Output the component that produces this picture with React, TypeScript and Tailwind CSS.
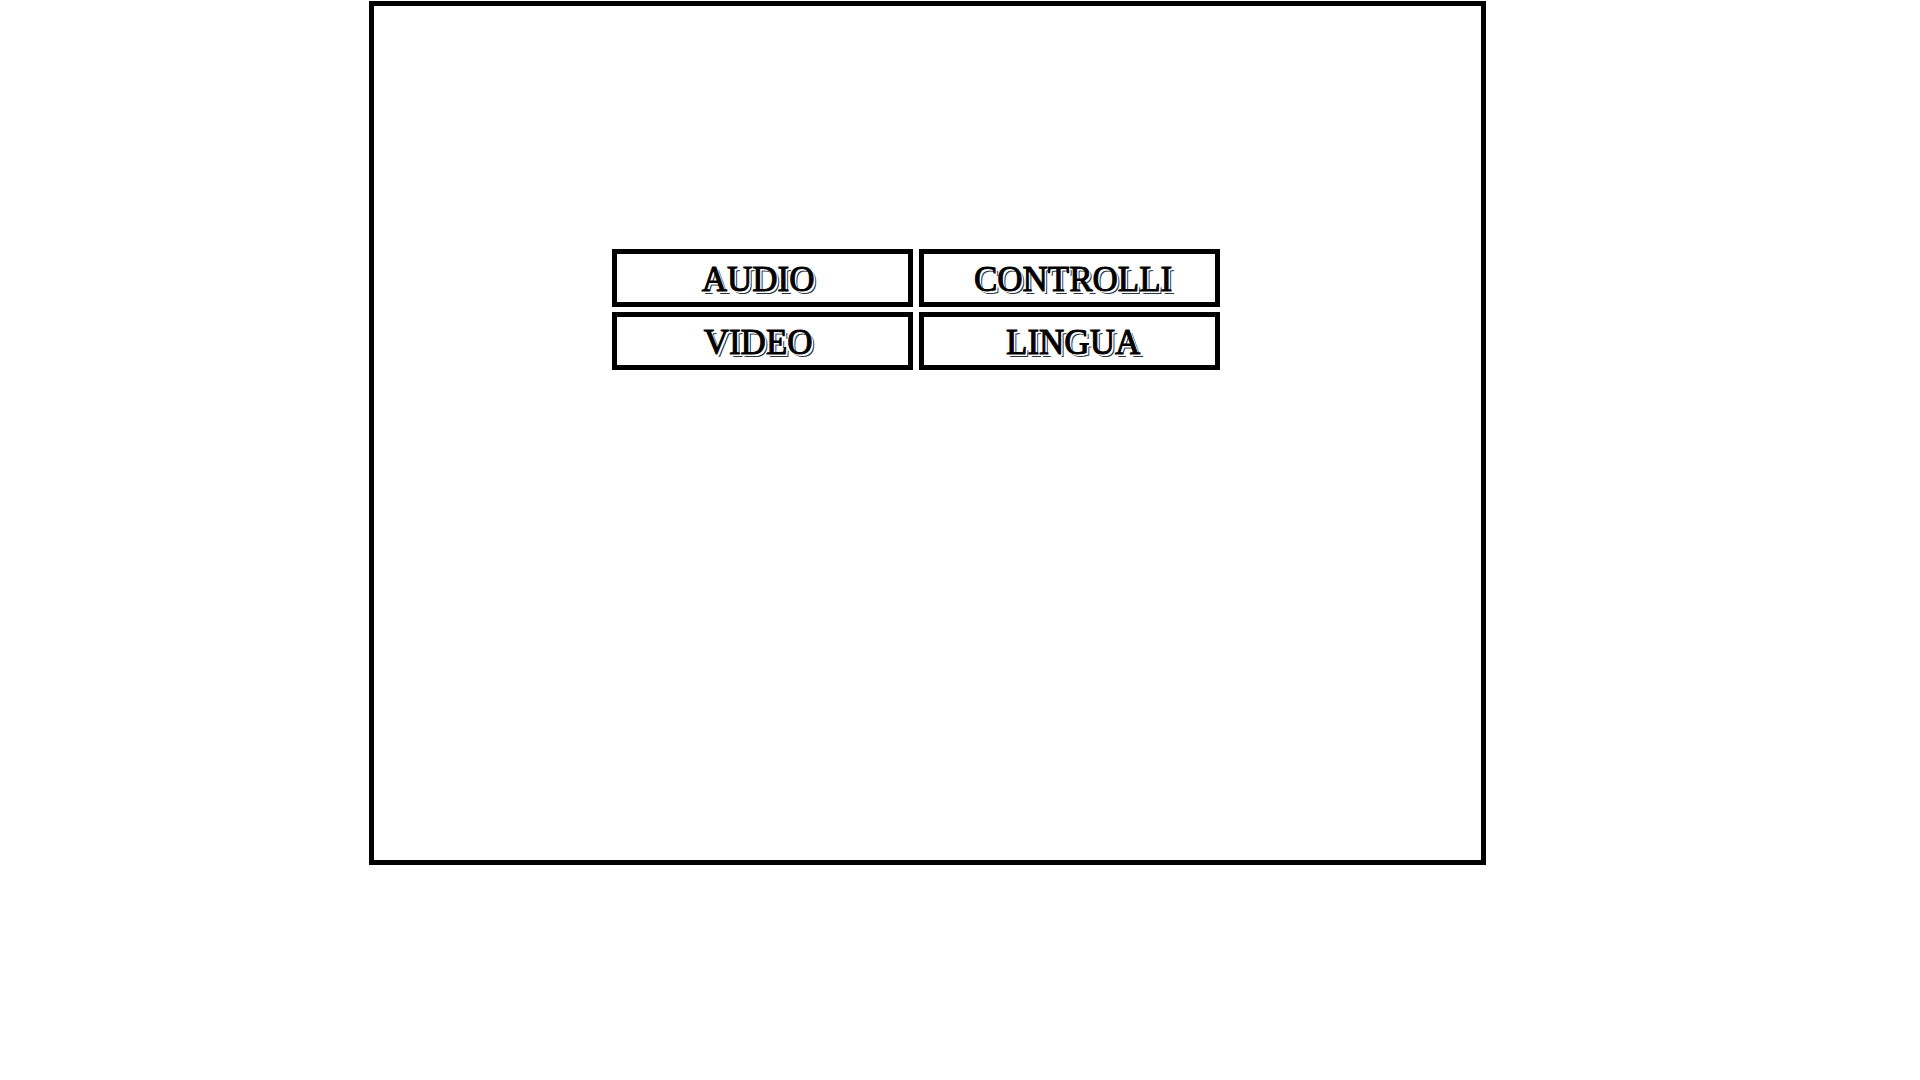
const columns = [
  { labels: ["AUDIO", "VIDEO"], className: "pr-2" },
  { labels: ["CONTROLLI", "LINGUA"], className: "pl-2" },
];

export default function App() {
  return (
    <div className="min-h-screen bg-white pt-px text-black">
      <main className="ml-[19.2%] h-[80vh] w-[58.2%] border-5 border-black pt-[243px] pl-[238px]">
        <nav aria-label="Impostazioni" className="flex w-[608px] max-w-full gap-[6px]">
          {columns.map((column) => (
            <div key={column.labels[0]} className="flex flex-1 flex-col gap-[5px]">
              {column.labels.map((label) => (
                <button
                  key={label}
                  type="button"
                  className={
                    "h-[58px] w-full border-5 border-black bg-white pt-1 font-['Liberation_Serif',serif] text-[35px] leading-[44px] [-webkit-text-stroke:1px_black] [text-shadow:1px_1px_0_white,2px_2px_0_white,3px_3px_0_#2b3644] " +
                    column.className
                  }
                >
                  {label}
                </button>
              ))}
            </div>
          ))}
        </nav>
      </main>
    </div>
  );
}
